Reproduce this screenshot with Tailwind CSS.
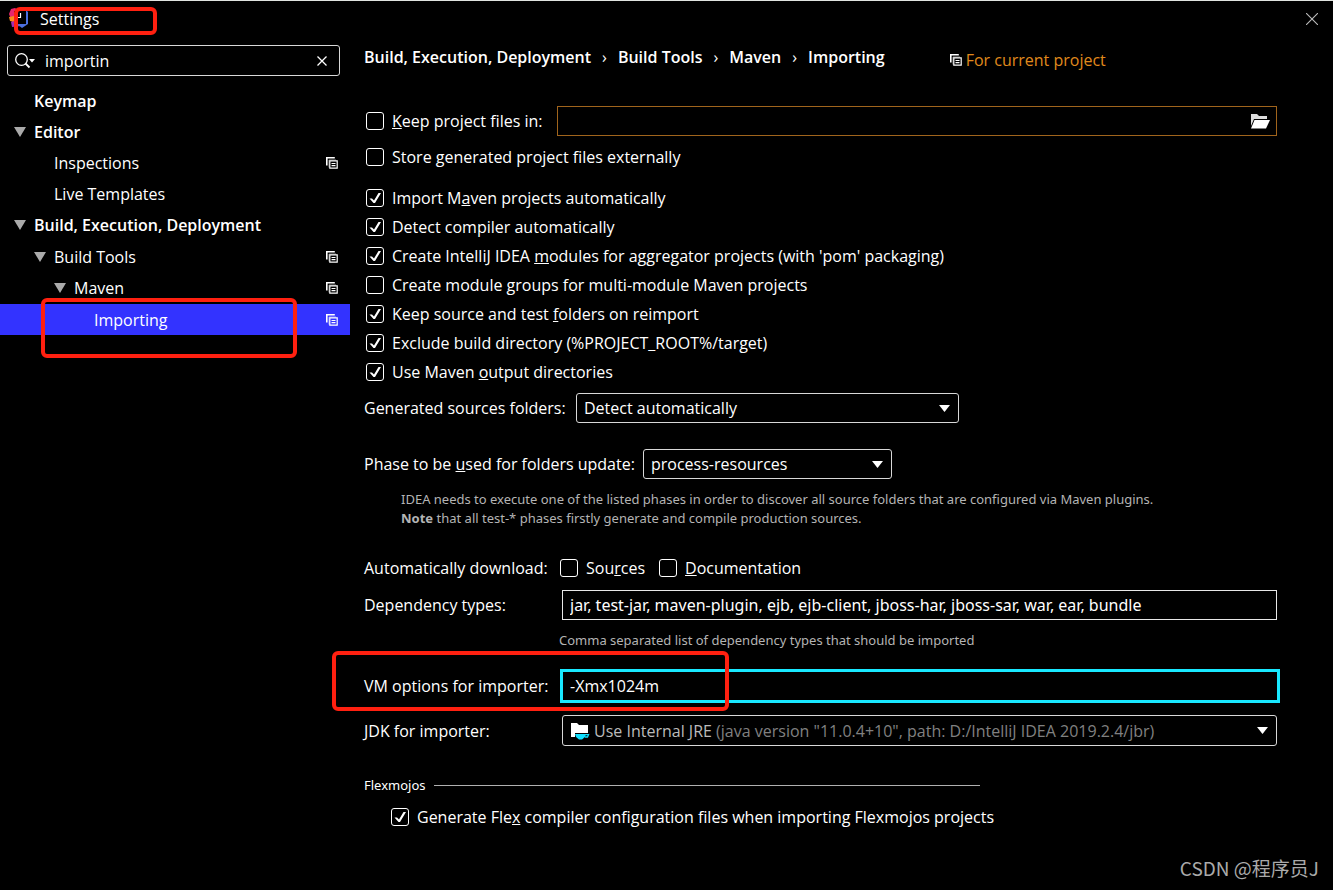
<!DOCTYPE html>
<html lang="en">
  <head>
    <meta charset="UTF-8" />
    <meta name="viewport" content="width=device-width, initial-scale=1.0" />
    <title>Settings</title>
    <script src="https://cdn.jsdelivr.net/npm/@tailwindcss/browser@4"></script>
  </head>
  <body class="relative min-h-screen flex flex-col bg-black border-t border-[#e0e4e0] text-white text-base leading-6 whitespace-nowrap font-['Open_Sans','Noto_Sans_CJK_SC',sans-serif]">
    <svg class="hidden">
      <symbol id="copy" viewBox="0 0 12 12">
        <path d="M.8 8.5V.8h8" fill="none" stroke="currentColor" stroke-width="1.6" />
        <path d="M3 10.5V3h7" fill="none" stroke="currentColor" stroke-opacity=".5" />
        <path d="M3.8 3.8h7.4v7.4H3.8z M5.5 6.5h4 M5.5 8.7h4" fill="none" stroke="currentColor" stroke-width="1.2" />
      </symbol>
      <symbol id="down" viewBox="0 0 11 7"><path d="M0 0h11L5.5 7z" fill="currentColor" /></symbol>
      <symbol id="tree-down" viewBox="0 0 12 10"><path d="M0 0h12L6 10z" fill="currentColor" /></symbol>
      <symbol id="tick" viewBox="0 0 18 18"><path d="M3.500 9.500H6l2 2L12.500 4h2.500L9 14H7.500z" fill="#fff" /></symbol>
    </svg>

    <header class="flex items-center h-9 pl-2 pr-[15px]">
      <svg class="size-6" viewBox="0 0 24 24">
        <path d="M3 2l4-1 6 4-3 8-6 2-3-8z" fill="#e8256f" />
        <path d="M1 10l5-1v6l-4-1z" fill="#f98a1c" />
        <path d="M3 15l7-2 3 6-9 1z" fill="#a32bb4" />
        <path d="M12 3l6 0 2 2v12l-6 4-4-3z" fill="#4b6fe0" />
        <path d="M6 4h12v13H6z" fill="#000" />
        <path d="M12.500 6v4.500h-2.500" fill="none" stroke="#fff" stroke-width="1.2" />
      </svg>
      <h1 class="ml-2">Settings</h1>
      <button class="ml-auto" aria-label="Close">
        <svg class="size-3" viewBox="0 0 12 12"><path d="M0 0l12 12M12 0L0 12" stroke="#bbb" stroke-width="1.1" /></svg>
      </button>
    </header>

    <div class="flex flex-1">
      <aside class="w-[350px] shrink-0 pt-2">
        <div class="flex items-center h-[31px] ml-[7px] mr-[10px] px-[7px] border border-[#d8d8d8] rounded-[3px]">
          <svg class="w-5 h-4 shrink-0" viewBox="0 0 20 16">
            <circle cx="6.5" cy="6.5" r="5.8" fill="none" stroke="#fff" stroke-width="1.3" />
            <path d="M10.5 10.5l4 4" stroke="#fff" stroke-width="1.8" />
            <path d="M14 6h6l-3 3.500z" fill="#fff" />
          </svg>
          <input type="text" value="importin" aria-label="Search settings" class="flex-1 min-w-0 ml-[10px] outline-none" />
          <button class="mr-[5px]" aria-label="Clear">
            <svg class="size-[10px]" viewBox="0 0 10 10"><path d="M.5.5l9 9M9.500.5l-9 9" stroke="#fff" stroke-width="1.3" /></svg>
          </button>
        </div>

        <ul class="mt-[9px] *:flex *:items-center *:h-[31px] *:pr-3">
          <li class="pl-[34px] font-semibold">Keymap</li>
          <li class="pl-[14px] font-semibold"><svg class="w-3 h-[10px] mr-2 text-[#aaa]"><use href="#tree-down" /></svg>Editor</li>
          <li class="pl-[54px]">Inspections<svg class="size-3 ml-auto"><use href="#copy" /></svg></li>
          <li class="pl-[54px]">Live Templates</li>
          <li class="pl-[14px] font-semibold"><svg class="w-3 h-[10px] mr-2 text-[#aaa]"><use href="#tree-down" /></svg>Build, Execution, Deployment</li>
          <li class="mt-px pl-[34px]"><svg class="w-3 h-[10px] mr-2 text-[#aaa]"><use href="#tree-down" /></svg>Build Tools<svg class="size-3 ml-auto"><use href="#copy" /></svg></li>
          <li class="pl-[54px]"><svg class="w-3 h-[10px] mr-2 text-[#aaa]"><use href="#tree-down" /></svg>Maven<svg class="size-3 ml-auto"><use href="#copy" /></svg></li>
          <li class="relative mt-px pl-[94px] bg-[#3333ff]">Importing<svg class="size-3 ml-auto"><use href="#copy" /></svg>
            <span class="absolute left-[41px] -top-[6px] w-[256px] h-[60px] border-4 border-[#ff2010] rounded-md"></span>
          </li>
        </ul>
      </aside>

      <main class="flex-1 min-w-0 pl-[14px] pr-14 pt-[6px]">
        <div class="flex items-center h-7">
          <nav class="flex items-center font-semibold gap-[11px]">
            <span>Build, Execution, Deployment</span><span class="font-normal">›</span>
            <span>Build Tools</span><span class="font-normal">›</span>
            <span>Maven</span><span class="font-normal">›</span>
            <span>Importing</span>
          </nav>
          <span class="flex items-center gap-1 ml-[65px] pt-[6px] text-[#e08a1c]"><svg class="size-3 text-white"><use href="#copy" /></svg>For current project</span>
        </div>

        <div class="flex items-center h-[30px] mt-[35px]">
          <label class="flex items-center gap-2"><input type="checkbox" class="appearance-none size-[18px] ml-[2px] border border-white rounded-[3px]" /><span><u>K</u>eep project files in:</span></label>
          <div class="flex items-center flex-1 h-full ml-[14px] border border-[#a0641c]">
            <input type="text" aria-label="Project files folder" class="flex-1 px-2 outline-none" />
            <button class="mr-[6px]" aria-label="Browse">
              <svg class="w-5 h-[15px]" viewBox="0 0 20 15"><path d="M1 12V0h6l2 2h8v3H4z" fill="#ddd" /><path d="M4.500 6H20l-4 8.500H1z" fill="#fff" /></svg>
            </button>
          </div>
        </div>
        <label class="flex items-center gap-2 h-[30px] mt-[6px]"><input type="checkbox" class="appearance-none size-[18px] ml-[2px] border border-white rounded-[3px]" /><span>Store generated project files externally</span></label>

        <div class="mt-[11px] *:flex *:items-center *:gap-2 *:h-[29px]">
          <label><span class="relative flex ml-[2px]"><input type="checkbox" checked class="peer appearance-none size-[18px] border border-white rounded-[3px]" /><svg class="absolute size-[18px] invisible peer-checked:visible"><use href="#tick" /></svg></span><span>Import M<u>a</u>ven projects automatically</span></label>
          <label><span class="relative flex ml-[2px]"><input type="checkbox" checked class="peer appearance-none size-[18px] border border-white rounded-[3px]" /><svg class="absolute size-[18px] invisible peer-checked:visible"><use href="#tick" /></svg></span><span>Detect compiler automatically</span></label>
          <label><span class="relative flex ml-[2px]"><input type="checkbox" checked class="peer appearance-none size-[18px] border border-white rounded-[3px]" /><svg class="absolute size-[18px] invisible peer-checked:visible"><use href="#tick" /></svg></span><span>Create IntelliJ IDEA <u>m</u>odules for aggregator projects (with 'pom' packaging)</span></label>
          <label><span class="relative flex ml-[2px]"><input type="checkbox" class="peer appearance-none size-[18px] border border-white rounded-[3px]" /><svg class="absolute size-[18px] invisible peer-checked:visible"><use href="#tick" /></svg></span><span>Create module <u>g</u>roups for multi-module Maven projects</span></label>
          <label><span class="relative flex ml-[2px]"><input type="checkbox" checked class="peer appearance-none size-[18px] border border-white rounded-[3px]" /><svg class="absolute size-[18px] invisible peer-checked:visible"><use href="#tick" /></svg></span><span>Keep source and test <u>f</u>olders on reimport</span></label>
          <label><span class="relative flex ml-[2px]"><input type="checkbox" checked class="peer appearance-none size-[18px] border border-white rounded-[3px]" /><svg class="absolute size-[18px] invisible peer-checked:visible"><use href="#tick" /></svg></span><span>Exclude build directory (%PROJECT_ROOT%/target)</span></label>
          <label><span class="relative flex ml-[2px]"><input type="checkbox" checked class="peer appearance-none size-[18px] border border-white rounded-[3px]" /><svg class="absolute size-[18px] invisible peer-checked:visible"><use href="#tick" /></svg></span><span>Use Maven <u>o</u>utput directories</span></label>
        </div>

        <div class="flex items-center mt-[7px]">
          <label for="generated" class="w-[212px]">Generated sources folders:</label>
          <div class="relative w-[383px]">
            <select id="generated" class="appearance-none w-full h-[30px] px-[7px] border border-[#d8d8d8] rounded-[3px]"><option>Detect automatically</option></select>
            <svg class="absolute right-[9px] top-3 w-[11px] h-[7px] pointer-events-none"><use href="#down" /></svg>
          </div>
        </div>
        <div class="flex items-center mt-[26px]">
          <label for="phase" class="w-[279px]">Phase to be <u>u</u>sed for folders update:</label>
          <div class="relative w-[249px]">
            <select id="phase" class="appearance-none w-full h-[30px] px-[7px] border border-[#d8d8d8] rounded-[3px]"><option>process-resources</option></select>
            <svg class="absolute right-[9px] top-3 w-[11px] h-[7px] pointer-events-none"><use href="#down" /></svg>
          </div>
        </div>
        <p class="mt-[11px] ml-[37px] font-['Noto_Sans',sans-serif] text-[13px] leading-[19px] text-[#b4b4b4]">IDEA needs to execute one of the listed phases in order to discover all source folders that are configured via Maven plugins.<br /><b>Note</b> that all test-* phases firstly generate and compile production sources.</p>

        <div class="flex items-center h-6 mt-7">
          <span class="w-[194px]">Automatically download:</span>
          <label class="flex items-center gap-2"><input type="checkbox" class="appearance-none size-[18px] ml-[2px] border border-white rounded-[3px]" /><span>Sou<u>r</u>ces</span></label>
          <label class="flex items-center gap-2 ml-3"><input type="checkbox" class="appearance-none size-[18px] ml-[2px] border border-white rounded-[3px]" /><span><u>D</u>ocumentation</span></label>
        </div>
        <div class="flex items-center mt-[10px]">
          <label for="types" class="w-[198px]">Dependency types:</label>
          <input id="types" type="text" value="jar, test-jar, maven-plugin, ejb, ejb-client, jboss-har, jboss-sar, war, ear, bundle" class="flex-1 h-[30px] px-[7px] border border-[#e8e8e8] outline-none font-['Noto_Sans',sans-serif]" />
        </div>
        <p class="mt-[11px] ml-[195px] font-['Noto_Sans',sans-serif] text-[13px] leading-[19px] text-[#b4b4b4]">Comma separated list of dependency types that should be imported</p>

        <div class="relative flex items-center mt-[19px] -mr-[3px]">
          <label for="vm" class="w-[196px]">VM options for importer:</label>
          <input id="vm" type="text" value="-Xmx1024m" class="flex-1 h-[34px] px-[7px] border-3 border-[#18e8ff] outline-none" />
          <span class="absolute -left-8 -top-[18px] w-[397px] h-[60px] border-4 border-[#ff2010] rounded-md pointer-events-none"></span>
        </div>
        <div class="flex items-center mt-3">
          <label for="jdk" class="w-[198px]">JDK for importer:</label>
          <div class="relative flex-1">
            <select id="jdk" class="[appearance:base-select] [&::picker-icon]:hidden flex items-center w-full h-[31px] pl-[31px] border border-[#d8d8d8] rounded-[3px] text-[#808080]"><button><selectedcontent></selectedcontent></button><option><span class="text-[#bbb]">Use Internal JRE</span> (java version "11.0.4+10", path: D:/IntelliJ IDEA 2019.2.4/jbr)</option></select>
            <svg class="absolute left-2 top-[7px] w-5 h-[18px] pointer-events-none" viewBox="0 0 20 18"><path d="M1 1h6l2 2h9v8H5v4H1z" fill="#fff" /><path d="M5 12h11l-1 3-3 2.500H9L6 15z" fill="#10e0ff" /><path d="M15 12.600h3.500l-1 2.400H15" fill="none" stroke="#10e0ff" stroke-width="1.3" /></svg>
            <svg class="absolute right-[9px] top-3 w-[11px] h-[7px] pointer-events-none"><use href="#down" /></svg>
          </div>
        </div>

        <fieldset class="mt-[29px]">
          <legend class="flex items-center gap-2 w-[616px] font-['Noto_Sans',sans-serif] text-[13px] leading-5">Flexmojos<span class="flex-1 h-px bg-[#b0b0b0]"></span></legend>
          <label class="flex items-center gap-2 mt-[10px] ml-[25px]"><span class="relative flex ml-[2px]"><input type="checkbox" checked class="peer appearance-none size-[18px] border border-white rounded-[3px]" /><svg class="absolute size-[18px] invisible peer-checked:visible"><use href="#tick" /></svg></span><span>Generate Fle<u>x</u> compiler configuration files when importing Flexmojos projects</span></label>
        </fieldset>
      </main>
    </div>

    <span class="absolute left-[14px] top-[6px] w-[143px] h-7 border-4 border-[#ff2010] rounded-md"></span>
    <span class="absolute right-[14px] bottom-[10px] font-['Noto_Sans_CJK_SC',sans-serif] text-[19px] leading-6 text-[#aaa]">CSDN @程序员J</span>
  </body>
</html>
